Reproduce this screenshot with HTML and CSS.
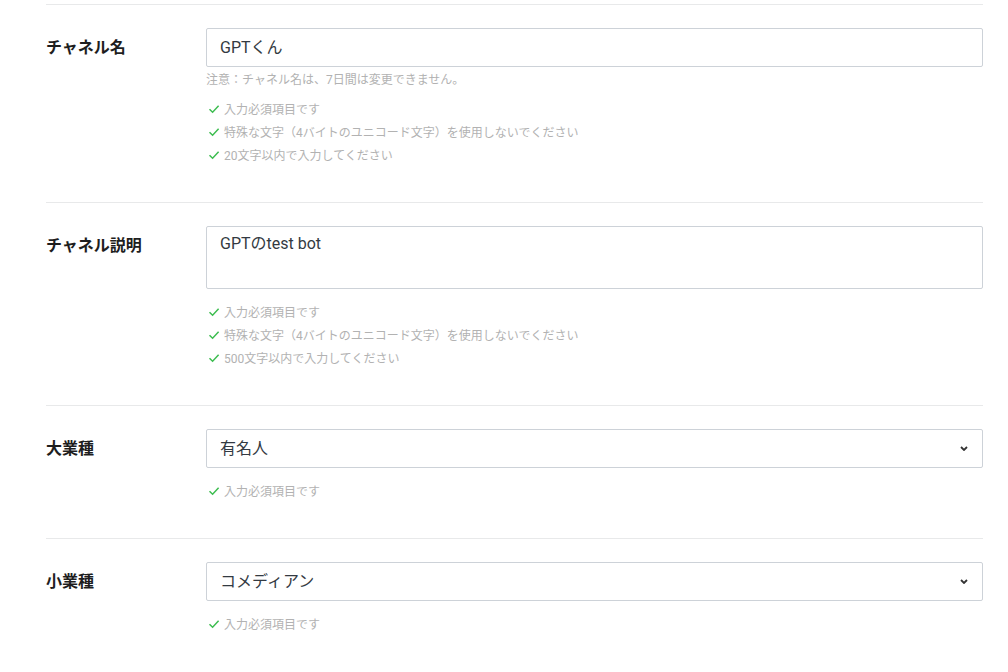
FILE: index.html
```html
<!DOCTYPE html>
<html lang="ja">
<head>
<meta charset="utf-8">
<title>チャネル設定</title>
<link rel="stylesheet" href="styles.css">
</head>
<body>
<div class="form">
  <section class="row">
    <div class="label">チャネル名</div>
    <div class="control">
      <div class="field">GPTくん</div>
      <p class="note">注意：チャネル名は、7日間は変更できません。</p>
      <ul class="checks checks-after-note">
        <li><svg class="ok" viewBox="0 0 12 10" width="12" height="10"><path d="M1.5 5.2 L4.6 8.2 L10.6 1.8"/></svg>入力必須項目です</li>
        <li><svg class="ok" viewBox="0 0 12 10" width="12" height="10"><path d="M1.5 5.2 L4.6 8.2 L10.6 1.8"/></svg>特殊な文字（4バイトのユニコード文字）を使用しないでください</li>
        <li><svg class="ok" viewBox="0 0 12 10" width="12" height="10"><path d="M1.5 5.2 L4.6 8.2 L10.6 1.8"/></svg>20文字以内で入力してください</li>
      </ul>
    </div>
  </section>
  <section class="row">
    <div class="label">チャネル説明</div>
    <div class="control">
      <div class="field field-area">GPTのtest bot</div>
      <ul class="checks">
        <li><svg class="ok" viewBox="0 0 12 10" width="12" height="10"><path d="M1.5 5.2 L4.6 8.2 L10.6 1.8"/></svg>入力必須項目です</li>
        <li><svg class="ok" viewBox="0 0 12 10" width="12" height="10"><path d="M1.5 5.2 L4.6 8.2 L10.6 1.8"/></svg>特殊な文字（4バイトのユニコード文字）を使用しないでください</li>
        <li><svg class="ok" viewBox="0 0 12 10" width="12" height="10"><path d="M1.5 5.2 L4.6 8.2 L10.6 1.8"/></svg>500文字以内で入力してください</li>
      </ul>
    </div>
  </section>
  <section class="row">
    <div class="label">大業種</div>
    <div class="control">
      <div class="field field-select"><span>有名人</span><svg class="chev" viewBox="0 0 8 5" width="8" height="5"><path d="M1 1 L4 4 L7 1"/></svg></div>
      <ul class="checks">
        <li><svg class="ok" viewBox="0 0 12 10" width="12" height="10"><path d="M1.5 5.2 L4.6 8.2 L10.6 1.8"/></svg>入力必須項目です</li>
      </ul>
    </div>
  </section>
  <section class="row">
    <div class="label">小業種</div>
    <div class="control">
      <div class="field field-select"><span>コメディアン</span><svg class="chev" viewBox="0 0 8 5" width="8" height="5"><path d="M1 1 L4 4 L7 1"/></svg></div>
      <ul class="checks">
        <li><svg class="ok" viewBox="0 0 12 10" width="12" height="10"><path d="M1.5 5.2 L4.6 8.2 L10.6 1.8"/></svg>入力必須項目です</li>
      </ul>
    </div>
  </section>
</div>
</body>
</html>
```

FILE: styles.css
```css
html, body {
  margin: 0;
  padding: 0;
  background: #ffffff;
}

body {
  font-family: Roboto, "Noto Sans CJK JP", sans-serif;
  color: #333333;
}

.form {
  width: 937px;
  margin: 0 0 0 46px;
  padding-top: 4px;
}

.row {
  display: grid;
  grid-template-columns: 160px 1fr;
  border-top: 1px solid #e8e9ea;
  padding: 23px 0 36px;
}

.label {
  font-size: 16px;
  font-weight: 700;
  line-height: 39px;
  color: #1e1e1e;
}

.control {
  min-width: 0;
}

.field {
  box-sizing: border-box;
  height: 39px;
  border: 1px solid #cdd2d8;
  border-radius: 2px;
  padding: 0 13px;
  font-size: 16px;
  line-height: 37px;
  color: #333a42;
}

.field-area {
  height: 63px;
  line-height: 24px;
  padding-top: 5px;
}

.field-select {
  display: flex;
  align-items: center;
  justify-content: space-between;
  padding-right: 14px;
}

.chev {
  fill: none;
  stroke: #333333;
  stroke-width: 1.8;
}

.note {
  margin: 4px 0 0;
  font-size: 12px;
  line-height: 18px;
  color: #b2b2b2;
}

.checks {
  list-style: none;
  margin: 11px 0 0;
  padding: 0;
}

.checks-after-note {
  margin-top: 8px;
}

.checks li {
  display: flex;
  align-items: center;
  height: 23px;
  font-size: 12px;
  color: #b2b2b2;
}

.ok {
  margin: 0 4px 0 2px;
  fill: none;
  stroke: #3dbd50;
  stroke-width: 1.5;
}
```
